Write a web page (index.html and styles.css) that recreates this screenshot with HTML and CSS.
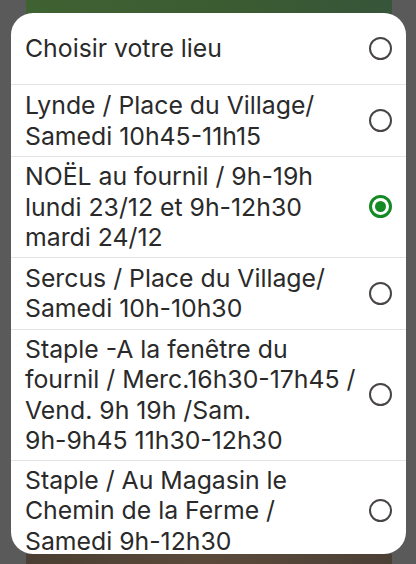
FILE: index.html
```html
<!DOCTYPE html>
<html lang="fr">
<head>
<meta charset="utf-8">
<link rel="stylesheet" href="styles.css">
</head>
<body>
<div class="backdrop">
  <div class="bg-top"></div>
  <div class="bg-mid"></div>
  <div class="bg-bottom"></div>
</div>
<div class="modal">
  <ul class="list">
    <li class="row">
      <span class="label">Choisir votre lieu</span>
      <span class="radio"></span>
    </li>
    <li class="row">
      <span class="label">Lynde / Place du Village/ Samedi 10h45-11h15</span>
      <span class="radio"></span>
    </li>
    <li class="row">
      <span class="label">NOËL au fournil / 9h-19h lundi 23/12 et 9h-12h30 mardi 24/12</span>
      <span class="radio checked"></span>
    </li>
    <li class="row">
      <span class="label">Sercus / Place du Village/ Samedi 10h-10h30</span>
      <span class="radio"></span>
    </li>
    <li class="row">
      <span class="label">Staple -A la fenêtre du fournil / Merc.16h30-17h45 / Vend. 9h 19h /Sam. <span class="nowrap">9h-9h45 11h30-12h30</span></span>
      <span class="radio"></span>
    </li>
    <li class="row">
      <span class="label">Staple / Au Magasin le Chemin de la Ferme / Samedi 9h-12h30</span>
      <span class="radio"></span>
    </li>
  </ul>
</div>
</body>
</html>
```

FILE: styles.css
```css
html, body {
  margin: 0;
  padding: 0;
  width: 416px;
  height: 564px;
  overflow: hidden;
  background: #5a5a5a;
  font-family: Inter, "Noto Sans", sans-serif;
}

.backdrop {
  height: 564px;
  margin: 0 24px 0 26px;
  display: flex;
  flex-direction: column;
}

.bg-top {
  height: 14px;
  background: linear-gradient(90deg, #3f6232, #3b5b32 60%, #36553a);
}

.bg-mid {
  flex: 1;
  background: #5a5a5a;
}

.bg-bottom {
  height: 10px;
  background: linear-gradient(90deg, #4a3f33, #5b4a3a 50%, #4b4036);
}

.modal {
  position: absolute;
  left: 11px;
  top: 13px;
  width: 395px;
  height: 541px;
  background: #ffffff;
  border-radius: 22px;
  overflow: hidden;
}

.list {
  list-style: none;
  margin: 0;
  padding: 0;
}

.row {
  display: flex;
  align-items: center;
  min-height: 72px;
  box-sizing: border-box;
  padding: 4px 14px 4px 14px;
  border-bottom: 1px solid #e4e4e4;
}

.label {
  flex: 1;
  font-size: 24.8px;
  line-height: 30.5px;
  color: #2a2a2a;
  padding-right: 7px;
}

.nowrap {
  white-space: nowrap;
}

.radio {
  flex: none;
  width: 23px;
  height: 23px;
  box-sizing: border-box;
  border: 2px solid #4a4545;
  border-radius: 50%;
  display: flex;
  align-items: center;
  justify-content: center;
}

.radio.checked {
  border: 3px solid #148a25;
}

.radio.checked::after {
  content: "";
  width: 11px;
  height: 11px;
  border-radius: 50%;
  background: #148a25;
}
```
